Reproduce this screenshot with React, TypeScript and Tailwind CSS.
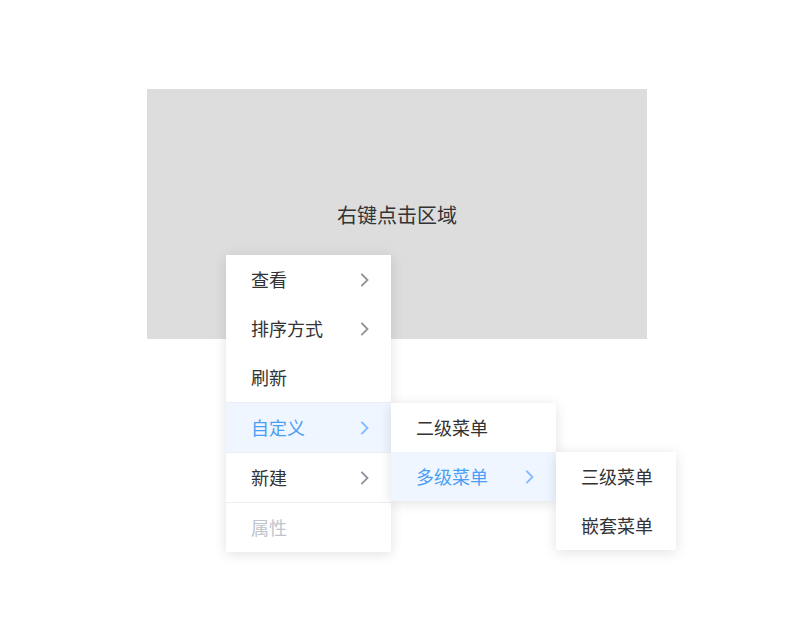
import React from "react";

type Item = {
  label: string;
  arrow?: boolean;
  active?: boolean;
  disabled?: boolean;
  divided?: boolean;
};

const mainItems: Item[] = [
  { label: "查看", arrow: true },
  { label: "排序方式", arrow: true },
  { label: "刷新" },
  { label: "自定义", arrow: true, active: true, divided: true },
  { label: "新建", arrow: true, divided: true },
  { label: "属性", disabled: true, divided: true },
];

const secondItems: Item[] = [
  { label: "二级菜单" },
  { label: "多级菜单", arrow: true, active: true },
];

const thirdItems: Item[] = [{ label: "三级菜单" }, { label: "嵌套菜单" }];

function Chevron({ active }: { active?: boolean }) {
  return (
    <svg width="10" height="14" viewBox="0 0 10 14" fill="none" aria-hidden="true">
      <path
        d="M2 1.5 L7.5 7 L2 12.5"
        stroke={active ? "#7fbaff" : "#909399"}
        strokeWidth="1.8"
        strokeLinecap="square"
      />
    </svg>
  );
}

function MenuRow({ item }: { item: Item }) {
  const color = item.disabled
    ? "text-[#c0c4cc]"
    : item.active
    ? "text-[#4a9ff5] bg-[#f0f6ff]"
    : "text-[#333333]";
  return (
    <div
      className={`flex items-center justify-between pl-[25px] pr-[21px] text-[18px] ${color} ${
        item.divided ? "h-[50px] border-t border-[#ebeef5]" : "h-[49px]"
      }`}
    >
      <span>{item.label}</span>
      {item.arrow && <Chevron active={item.active} />}
    </div>
  );
}

export default function App() {
  return (
    <div
      className="relative h-[618px] w-[809px] bg-white"
      style={{ fontFamily: '"Noto Sans CJK SC", "Noto Sans", sans-serif' }}
    >
      <div className="ml-[147px] pt-[89px]">
        <div className="flex h-[250px] w-[500px] items-center justify-center bg-[#dddddd] pt-[2px] text-[20px] text-[#333333]">
          右键点击区域
        </div>
      </div>

      <div className="absolute left-[226px] top-[255px] w-[165px] bg-white shadow-[0_2px_12px_rgba(0,0,0,0.12)]">
        {mainItems.map((it) => (
          <MenuRow key={it.label} item={it} />
        ))}

        <div className="absolute left-full top-[148px] w-[165px] bg-white shadow-[0_2px_12px_rgba(0,0,0,0.12)]">
          {secondItems.map((it) => (
            <MenuRow key={it.label} item={it} />
          ))}

          <div className="absolute left-full top-[49px] w-[120px] bg-white shadow-[0_2px_12px_rgba(0,0,0,0.12)]">
            {thirdItems.map((it) => (
              <MenuRow key={it.label} item={it} />
            ))}
          </div>
        </div>
      </div>
    </div>
  );
}
